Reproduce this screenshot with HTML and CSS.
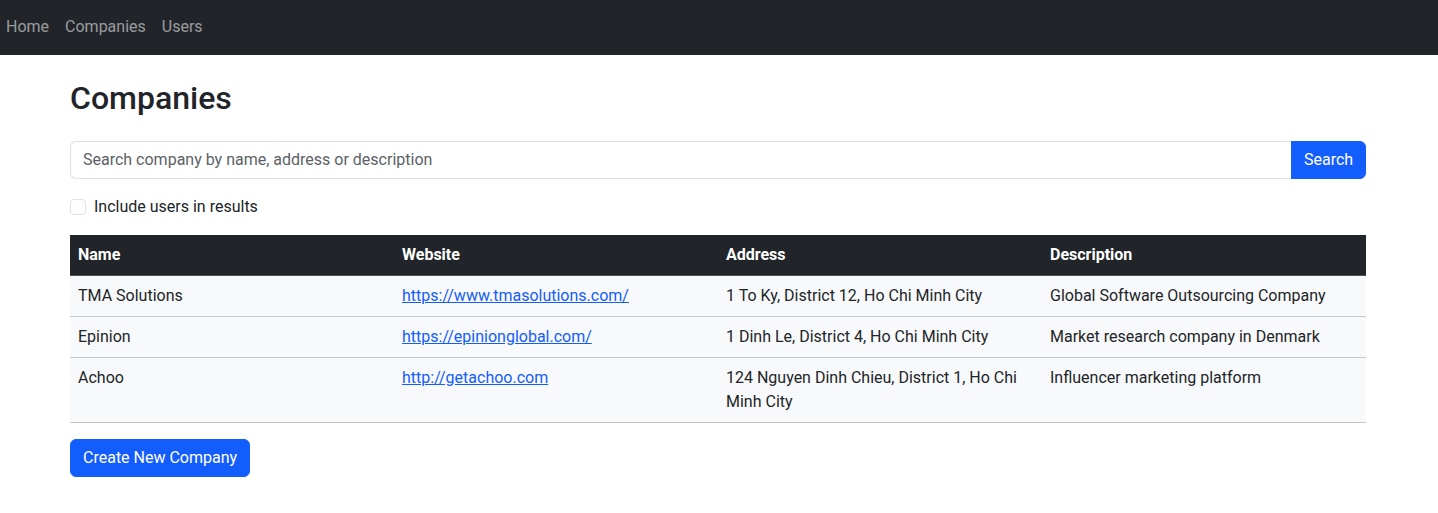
FILE: index.html
```html
<!DOCTYPE html>
<html lang="en">
<head>
<meta charset="utf-8">
<title>Companies</title>
<link rel="stylesheet" href="styles.css">
</head>
<body>
<nav class="navbar">
  <a class="nav-link" href="#">Home</a>
  <a class="nav-link" href="#">Companies</a>
  <a class="nav-link" href="#">Users</a>
</nav>
<main class="container">
  <h2 class="title">Companies</h2>
  <form class="search">
    <input class="search-input" type="text" placeholder="Search company by name, address or description">
    <button class="btn search-btn" type="button">Search</button>
  </form>
  <label class="check">
    <span class="check-box"></span>
    <span>Include users in results</span>
  </label>
  <table class="table">
    <thead>
      <tr><th>Name</th><th>Website</th><th>Address</th><th>Description</th></tr>
    </thead>
    <tbody>
      <tr><td>TMA Solutions</td><td><a href="#">https://www.tmasolutions.com/</a></td><td>1 To Ky, District 12, Ho Chi Minh City</td><td>Global Software Outsourcing Company</td></tr>
      <tr><td>Epinion</td><td><a href="#">https://epinionglobal.com/</a></td><td>1 Dinh Le, District 4, Ho Chi Minh City</td><td>Market research company in Denmark</td></tr>
      <tr><td>Achoo</td><td><a href="#">http://getachoo.com</a></td><td>124 Nguyen Dinh Chieu, District 1, Ho Chi Minh City</td><td>Influencer marketing platform</td></tr>
    </tbody>
  </table>
  <button class="btn create-btn" type="button">Create New Company</button>
</main>
</body>
</html>
```

FILE: styles.css
```css
* { box-sizing: border-box; }
html, body { margin: 0; padding: 0; }
body {
  font-family: Roboto, "Liberation Sans", sans-serif;
  font-size: 16px;
  line-height: 24px;
  color: #212529;
  background: #fff;
}
.navbar {
  height: 55px;
  background: #212529;
  display: flex;
  align-items: center;
  padding: 0 0 2px 6px;
  gap: 16px;
}
.nav-link {
  color: rgba(255, 255, 255, 0.55);
  text-decoration: none;
  font-size: 16px;
}
.container {
  width: 1296px;
  margin-left: 70px;
}
.title {
  font-size: 32px;
  font-weight: 500;
  line-height: 38px;
  margin: 24px 0 24px;
}
.search {
  display: flex;
  height: 38px;
  margin: 0;
}
.search-input {
  flex: 1;
  height: 38px;
  border: 1px solid #dee2e6;
  border-right: 0;
  border-radius: 6px 0 0 6px;
  padding: 5px 12px 7px;
  font-family: inherit;
  font-size: 16px;
  color: #212529;
  outline: none;
}
.search-input::placeholder { color: #5c6167; }
.btn {
  background: #135dfd;
  color: #fff;
  border: 1px solid #135dfd;
  font-family: inherit;
  font-size: 16px;
  line-height: 24px;
  padding: 6px 12px;
  cursor: pointer;
}
.search-btn {
  border-radius: 0 6px 6px 0;
  width: 75px;
  height: 38px;
}
.check {
  display: flex;
  align-items: center;
  gap: 8px;
  margin-top: 16px;
  height: 24px;
}
.check-box {
  width: 16px;
  height: 16px;
  border: 1px solid #dee2e6;
  border-radius: 4px;
  background: #fff;
}
.table {
  width: 100%;
  table-layout: fixed;
  border-collapse: collapse;
  margin: 16px 0 16px;
}
.table th, .table td {
  padding: 8px;
  text-align: left;
  vertical-align: top;
}
.table thead th {
  background: #212529;
  color: #fff;
  font-weight: 700;
  border-bottom: 1px solid #4d5154;
}
.table tbody td {
  background: #f8f9fa;
  border-bottom: 1px solid #c6c7c8;
}
.table a { color: #135dfd; }
.create-btn {
  border-radius: 6px;
  height: 38px;
}
```
